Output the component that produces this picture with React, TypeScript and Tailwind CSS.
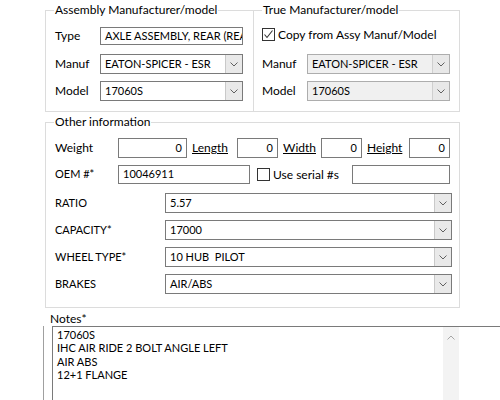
import React from "react";

const Chevron = ({ up = false, color = "#606060" }: { up?: boolean; color?: string }) => (
  <svg width="8" height="5" viewBox="0 0 8 5" className={up ? "rotate-180" : ""}>
    <polyline points="0.5,0.5 4,4 7.5,0.5" fill="none" stroke={color} strokeWidth="1" />
  </svg>
);

const GroupBox = ({
  title,
  className,
  children,
}: {
  title: string;
  className: string;
  children: React.ReactNode;
}) => (
  <div className={`relative border border-[#dcdcdc] ${className}`}>
    {/* legend sits over the top border line */}
    <span className="absolute left-[8px] top-[-8px] bg-white px-[1px] leading-[14px] text-[12px]">
      {title}
    </span>
    {children}
  </div>
);

const TextBox = ({
  value,
  className,
  right = false,
}: {
  value: string;
  className: string;
  right?: boolean;
}) => (
  <div
    className={`flex items-center border border-[#7a7a7a] bg-white px-[4px] whitespace-nowrap overflow-hidden ${
      right ? "justify-end" : ""
    } ${className}`}
  >
    {value}
  </div>
);

const Combo = ({
  value,
  className,
  disabled = false,
}: {
  value: string;
  className: string;
  disabled?: boolean;
}) => (
  <div
    className={`flex border ${
      disabled ? "border-[#adadad] bg-[#f0f0f0]" : "border-[#7a7a7a] bg-white"
    } ${className}`}
  >
    <div className="flex-1 flex items-center pl-[4px] whitespace-pre overflow-hidden">{value}</div>
    <div
      className={`w-[17px] flex items-center justify-center border-l ${
        disabled ? "border-[#cfcfcf] bg-[#e8e8e8]" : "border-[#c9c9c9] bg-[#e9e9e9]"
      }`}
    >
      <Chevron />
    </div>
  </div>
);

const CheckBox = ({ checked = false }: { checked?: boolean }) => (
  <div className="w-[13px] h-[13px] border border-[#333333] bg-white flex items-center justify-center">
    {checked && (
      <svg width="11" height="11" viewBox="0 0 11 11">
        <polyline points="1.5,5.5 4,8.5 9.5,1.5" fill="none" stroke="#333333" strokeWidth="1.1" />
      </svg>
    )}
  </div>
);

const comboRows = [
  { label: "RATIO", value: "5.57", mt: "mt-[9px]" },
  { label: "CAPACITY*", value: "17000", mt: "mt-[7px]" },
  { label: "WHEEL TYPE*", value: "10 HUB  PILOT", mt: "mt-[7px]" },
  { label: "BRAKES", value: "AIR/ABS", mt: "mt-[7px]" },
];

const notes = ["17060S", "IHC AIR RIDE 2 BOLT ANGLE LEFT", "AIR ABS", "12+1 FLANGE"];

export default function App() {
  return (
    <div className="w-[500px] h-[400px] overflow-hidden bg-white text-[11px] text-black font-['Lato',sans-serif]">
      {/* Top group boxes */}
      <div className="flex pl-[45px] pt-[10px]">
        <GroupBox title="Assembly Manufacturer/model" className="w-[209px] h-[102px]">
          <div className="pl-[9px] pt-[16px] text-[12px]">
            <div className="flex h-[18px] items-center">
              <span className="w-[45px]">Type</span>
              <TextBox value="AXLE ASSEMBLY, REAR (REAR" className="w-[143px] h-[18px] text-[11px]" />
            </div>
            <div className="flex h-[20px] items-center mt-[9px]">
              <span className="w-[45px]">Manuf</span>
              <Combo value="EATON-SPICER - ESR" className="w-[143px] h-[20px] text-[11px]" />
            </div>
            <div className="flex h-[20px] items-center mt-[7px]">
              <span className="w-[45px]">Model</span>
              <Combo value="17060S" className="w-[143px] h-[20px] text-[11px]" />
            </div>
          </div>
        </GroupBox>
        <GroupBox title="True Manufacturer/model" className="w-[206px] h-[102px] border-l-0">
          <div className="pl-[8px] pt-[17px] text-[12px]">
            <div className="flex items-center h-[13px] gap-[3px]">
              <CheckBox checked />
              <span>Copy from Assy Manuf/Model</span>
            </div>
            <div className="flex h-[20px] items-center mt-[13px]">
              <span className="w-[45px]">Manuf</span>
              <Combo value="EATON-SPICER - ESR" className="w-[143px] h-[20px] text-[11px]" disabled />
            </div>
            <div className="flex h-[20px] items-center mt-[7px]">
              <span className="w-[45px]">Model</span>
              <Combo value="17060S" className="w-[143px] h-[20px] text-[11px]" disabled />
            </div>
          </div>
        </GroupBox>
      </div>

      {/* Other information */}
      <div className="pl-[45px] mt-[10px]">
        <GroupBox title="Other information" className="w-[415px] h-[186px]">
          <div className="pl-[9px] pt-[15px] text-[12px]">
            <div className="flex h-[20px] items-center">
              <span className="w-[63px]">Weight</span>
              <TextBox value="0" right className="w-[69px] h-[20px] text-[11px]" />
              <span className="ml-[5px] w-[45px] underline">Length</span>
              <TextBox value="0" right className="w-[41px] h-[20px] text-[11px]" />
              <span className="ml-[5px] w-[38px] underline">Width</span>
              <TextBox value="0" right className="w-[41px] h-[20px] text-[11px]" />
              <span className="ml-[5px] w-[42px] underline">Height</span>
              <TextBox value="0" right className="w-[41px] h-[20px] text-[11px]" />
            </div>
            <div className="flex h-[19px] items-center mt-[7px]">
              <span className="w-[63px] text-[11px]">OEM #*</span>
              <TextBox value="10046911" className="w-[132px] h-[19px] text-[11px]" />
              <div className="ml-[7px]">
                <CheckBox />
              </div>
              <span className="ml-[3px] w-[79px]">Use serial #s</span>
              <TextBox value="" className="w-[98px] h-[19px]" />
            </div>
            {comboRows.map((r) => (
              <div key={r.label} className={`flex h-[20px] items-center text-[11px] ${r.mt}`}>
                <span className="w-[110px]">{r.label}</span>
                <Combo value={r.value} className="w-[287px] h-[20px]" />
              </div>
            ))}
          </div>
        </GroupBox>
      </div>

      {/* Notes */}
      <div className="mt-[4px]">
        <div className="pl-[50px] leading-[14px] text-[12px]">Notes*</div>
        <div className="flex h-[80px]">
          <div className="ml-[43px] w-px bg-[#a0a0a0]" />
          <div className="ml-[8px] flex-1 flex border-t border-l border-[#7a7a7a]">
            <div className="w-[390px] pl-[4px] pt-[1px] leading-[13.4px] text-[11px]">
              {notes.map((n) => (
                <div key={n}>{n}</div>
              ))}
            </div>
            <div className="w-[16px] bg-[#f3f3f3] flex justify-center pt-[8px]">
              <Chevron up color="#a6a6a6" />
            </div>
            <div className="flex-1" />
          </div>
        </div>
      </div>
    </div>
  );
}
